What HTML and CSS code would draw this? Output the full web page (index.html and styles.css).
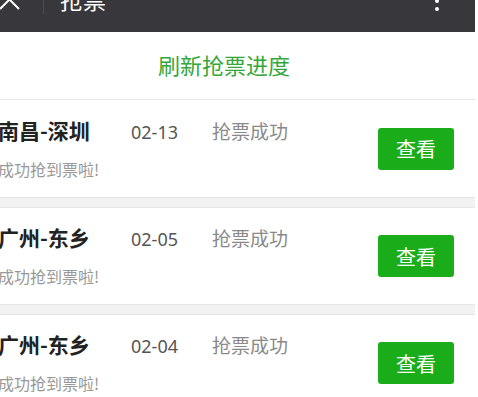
FILE: index.html
```html
<!DOCTYPE html>
<html lang="zh-CN">
<head>
    <meta charset="UTF-8">
    <meta name="viewport" content="width=device-width, initial-scale=1.0">
    <title>抢票</title>
    <link rel="stylesheet" href="styles.css">
</head>
<body>
    <div class="page">
        <div class="topbar">
            <div class="topbar-inner">
                <svg class="close-icon" width="20" height="20" viewBox="0 0 20 20">
                    <path d="M0 -1 L19 18 M19 -1 L0 18" stroke="#fff" stroke-width="2" fill="none"/>
                </svg>
                <div class="divider"></div>
                <div class="topbar-title">抢票</div>
                <div class="menu-dots">
                    <span></span><span></span><span></span>
                </div>
            </div>
        </div>

        <div class="refresh">刷新抢票进度</div>

        <div class="order-list">
            <div class="order">
                <div class="order-info">
                    <div class="order-line">
                        <span class="route">南昌-深圳</span>
                        <span class="date">02-13</span>
                        <span class="status">抢票成功</span>
                    </div>
                    <div class="order-tip">成功抢到票啦!</div>
                </div>
                <button class="view-btn">查看</button>
            </div>
            <div class="order">
                <div class="order-info">
                    <div class="order-line">
                        <span class="route">广州-东乡</span>
                        <span class="date">02-05</span>
                        <span class="status">抢票成功</span>
                    </div>
                    <div class="order-tip">成功抢到票啦!</div>
                </div>
                <button class="view-btn">查看</button>
            </div>
            <div class="order">
                <div class="order-info">
                    <div class="order-line">
                        <span class="route">广州-东乡</span>
                        <span class="date">02-04</span>
                        <span class="status">抢票成功</span>
                    </div>
                    <div class="order-tip">成功抢到票啦!</div>
                </div>
                <button class="view-btn">查看</button>
            </div>
        </div>
    </div>
</body>
</html>
```

FILE: styles.css
```css
body {
    margin: 0;
    padding: 0;
    background-color: #fff;
    font-family: "Noto Sans", "Noto Sans CJK SC", sans-serif;
    overflow: hidden;
}
.page {
    width: 475px;
    background-color: #fff;
}

/* 顶部标题栏 */
.topbar {
    height: 32px;
    background-color: #38383c;
    overflow: hidden;
}
.topbar-inner {
    display: flex;
    align-items: flex-start;
    margin-top: -11px;
    height: 30px;
}
.close-icon {
    margin-top: 2px;
    flex-shrink: 0;
}
.divider {
    width: 1px;
    height: 25px;
    background-color: #4c4c50;
    margin-left: 23px;
}
.topbar-title {
    color: #fff;
    font-size: 23px;
    line-height: 23px;
    margin-top: 0;
    margin-left: 16px;
}
.menu-dots {
    margin-left: auto;
    margin-right: 36px;
    display: flex;
    flex-direction: column;
    gap: 4px;
    padding-top: 2px;
}
.menu-dots span {
    display: block;
    width: 4px;
    height: 4px;
    border-radius: 50%;
    background-color: #fff;
}

/* 刷新 */
.refresh {
    height: 67px;
    line-height: 67px;
    text-align: center;
    padding-right: 27px;
    font-size: 22px;
    color: #35a73a;
    border-bottom: 1px solid #e8e8e8;
}

/* 列表 */
.order-list {
    display: flex;
    flex-direction: column;
    gap: 9px;
    background-color: #f2f2f2;
}
.order {
    display: flex;
    align-items: center;
    justify-content: space-between;
    height: 98px;
    background-color: #fff;
    border-bottom: 1px solid #e6e6e6;
    box-sizing: border-box;
}
.order + .order {
    border-top: 1px solid #e6e6e6;
}
.order-info {
    margin-left: -2px;
}
.order-line {
    display: flex;
    align-items: baseline;
    line-height: 22px;
}
.route {
    font-family: "Noto Sans CJK SC", sans-serif;
    font-size: 21px;
    font-weight: bold;
    color: #222;
    width: 133px;
}
.date {
    font-size: 18px;
    color: #555;
    width: 81px;
}
.status {
    font-size: 19px;
    color: #8a8a8a;
}
.order-tip {
    margin-top: 16px;
    font-family: "Noto Sans CJK SC", sans-serif;
    font-size: 16px;
    line-height: 20px;
    color: #999;
}
.view-btn {
    width: 76px;
    height: 42px;
    margin-right: 21px;
    border: none;
    border-radius: 3px;
    background-color: #1aad19;
    color: #fff;
    font-family: "Noto Sans CJK SC", sans-serif;
    font-size: 20px;
    cursor: pointer;
}
```
